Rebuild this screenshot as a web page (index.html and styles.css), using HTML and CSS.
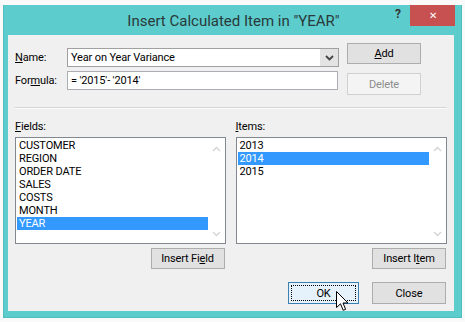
FILE: index.html
```html
<!DOCTYPE html>
<html lang="en">
<head>
    <meta charset="UTF-8">
    <title>Insert Calculated Item</title>
    <link rel="stylesheet" href="styles.css">
</head>
<body>
    <div class="window">
        <div class="titlebar">
            <div class="title">Insert Calculated Item in "YEAR"</div>
            <div class="help">?</div>
            <div class="close-x">&#x2715;</div>
        </div>

        <div class="client">
            <div class="top">
                <div class="form">
                    <div class="form-row">
                        <label class="lbl"><u>N</u>ame:</label>
                        <div class="combo">
                            <span class="combo-text">Year on Year Variance</span>
                            <span class="combo-btn">
                                <svg width="9" height="6" viewBox="0 0 9 6"><path d="M1 1 L4.5 4.5 L8 1" fill="none" stroke="#444" stroke-width="1.8"/></svg>
                            </span>
                        </div>
                    </div>
                    <div class="form-row">
                        <label class="lbl">For<u>m</u>ula:</label>
                        <div class="textbox">= '2015'- '2014'</div>
                    </div>
                </div>
                <div class="side-buttons">
                    <button class="btn btn-add"><u>A</u>dd</button>
                    <button class="btn btn-delete">Delete</button>
                </div>
            </div>

            <div class="separator"></div>

            <div class="lists">
                <div class="list-col">
                    <div class="list-label"><u>F</u>ields:</div>
                    <div class="listbox">
                        <div class="list-items">
                            <div class="list-item">CUSTOMER</div>
                            <div class="list-item">REGION</div>
                            <div class="list-item">ORDER DATE</div>
                            <div class="list-item">SALES</div>
                            <div class="list-item">COSTS</div>
                            <div class="list-item">MONTH</div>
                            <div class="list-item selected">YEAR</div>
                        </div>
                        <div class="scrollbar">
                            <svg width="9" height="6" viewBox="0 0 9 6"><path d="M1 5 L4.5 1.5 L8 5" fill="none" stroke="#d4d4d4" stroke-width="1.4"/></svg>
                            <svg width="9" height="6" viewBox="0 0 9 6"><path d="M1 1 L4.5 4.5 L8 1" fill="none" stroke="#d4d4d4" stroke-width="1.4"/></svg>
                        </div>
                    </div>
                    <div class="list-actions">
                        <button class="btn btn-insert">Insert Fi<u>e</u>ld</button>
                    </div>
                </div>
                <div class="list-col list-col-right">
                    <div class="list-label"><u>I</u>tems:</div>
                    <div class="listbox">
                        <div class="list-items">
                            <div class="list-item">2013</div>
                            <div class="list-item selected">2014</div>
                            <div class="list-item">2015</div>
                        </div>
                        <div class="scrollbar">
                            <svg width="9" height="6" viewBox="0 0 9 6"><path d="M1 5 L4.5 1.5 L8 5" fill="none" stroke="#d4d4d4" stroke-width="1.4"/></svg>
                            <svg width="9" height="6" viewBox="0 0 9 6"><path d="M1 1 L4.5 4.5 L8 1" fill="none" stroke="#d4d4d4" stroke-width="1.4"/></svg>
                        </div>
                    </div>
                    <div class="list-actions">
                        <button class="btn btn-insert">Insert I<u>t</u>em</button>
                    </div>
                </div>
            </div>

            <div class="footer">
                <button class="btn btn-ok"><span class="focus-rect">OK</span></button>
                <button class="btn btn-close">Close</button>
            </div>
        </div>

        <svg class="cursor" width="13" height="21" viewBox="0 0 13 21">
            <path d="M0.5 0.5 L0.5 16.5 L4.5 12.8 L7.2 19.3 L9.6 18.3 L7 12 L12 12 Z" fill="#fff" stroke="#000" stroke-width="1" stroke-linejoin="miter"/>
        </svg>
    </div>
</body>
</html>
```

FILE: styles.css
```css
* {
    margin: 0;
    padding: 0;
    box-sizing: border-box;
}

body {
    font-family: Roboto, 'Noto Sans', sans-serif;
    font-size: 11px;
    font-weight: 400;
    letter-spacing: -0.15px;
    color: #000;
    background: #fafafa;
    padding: 5px 0 0 3px;
}

.window {
    position: relative;
    width: 459px;
    height: 313px;
    background: #5ccccc;
    border: 1px solid #52bdbd;
    border-top: none;
}

.titlebar {
    position: relative;
    height: 30px;
    display: flex;
    align-items: center;
    justify-content: center;
}

.title {
    font-size: 15px;
    letter-spacing: 0;
    color: #2a3a3a;
    padding-top: 2px;
    padding-left: 2px;
}

.help {
    position: absolute;
    left: 391px;
    top: 2px;
    font-size: 12px;
    font-weight: bold;
    color: #333;
}

.close-x {
    position: absolute;
    left: 406px;
    top: 0;
    width: 45px;
    height: 21px;
    background: #c75050;
    color: #fff;
    font-size: 10px;
    display: flex;
    align-items: center;
    justify-content: center;
}

.client {
    margin: 0 7px 0 4px;
    height: 276px;
    background: #f0f0f0;
    padding: 8px 7px 0 7px;
}

.top {
    display: flex;
    align-items: flex-start;
}

.form {
    margin-top: 5px;
    display: flex;
    flex-direction: column;
    gap: 4px;
}

.form-row {
    display: flex;
    align-items: center;
}

.lbl {
    width: 52px;
}

.combo {
    width: 272px;
    height: 19px;
    display: flex;
    background: #fff;
    border: 1px solid #a0a0a0;
}

.combo-text {
    flex: 1;
    padding: 1px 3px;
    line-height: 15px;
}

.combo-btn {
    width: 18px;
    background: #e3e3e3;
    display: flex;
    align-items: center;
    justify-content: center;
}

.textbox {
    width: 271px;
    height: 19px;
    background: #fff;
    border: 1px solid #abadb3;
    padding: 1px 3px;
    line-height: 15px;
}

.side-buttons {
    margin-left: 8px;
    display: flex;
    flex-direction: column;
    gap: 9px;
}

.btn {
    font-family: inherit;
    font-size: 11px;
    font-weight: 400;
    letter-spacing: -0.15px;
    color: #000;
    background: #e1e1e1;
    border: 1px solid #adadad;
    height: 21px;
    display: flex;
    align-items: center;
    justify-content: center;
}

.btn-add {
    width: 74px;
}

.btn-delete {
    width: 74px;
    height: 22px;
    background: #f4f4f4;
    border-color: #d0d0d0;
    color: #8d8d8d;
}

.separator {
    margin-top: 12px;
    border-top: 1px solid #d7d7d7;
    border-bottom: 1px solid #fafafa;
}

.lists {
    display: flex;
    gap: 10px;
    margin-top: 11px;
}

.list-col {
    width: 211px;
}

.list-col-right {
    width: 212px;
}

.list-label {
    height: 17px;
    line-height: 14px;
}

.listbox {
    height: 107px;
    background: #fff;
    border: 1px solid #828790;
    display: flex;
    padding: 1px 0 1px 1px;
}

.list-items {
    flex: 1;
}

.list-item {
    height: 13px;
    line-height: 13px;
    padding-left: 2px;
}

.list-item.selected {
    background: #3399ff;
    color: #fff;
}

.scrollbar {
    width: 17px;
    display: flex;
    flex-direction: column;
    justify-content: space-between;
    align-items: center;
    padding: 7px 0 5px;
}

.list-actions {
    display: flex;
    justify-content: flex-end;
    padding-right: 1px;
    margin-top: 4px;
}

.btn-insert {
    width: 74px;
}

.footer {
    display: flex;
    justify-content: flex-end;
    gap: 13px;
    margin-top: 13px;
    padding-right: 1px;
}

.btn-ok {
    width: 71px;
    height: 22px;
    background: #e5f1fb;
    border-color: #3c7fb1;
    padding: 2px;
}

.focus-rect {
    width: 100%;
    height: 100%;
    border: 1px dotted #000;
    display: flex;
    align-items: center;
    justify-content: center;
}

.btn-close {
    width: 74px;
    height: 22px;
}

.cursor {
    position: absolute;
    left: 332px;
    top: 286px;
}
```
